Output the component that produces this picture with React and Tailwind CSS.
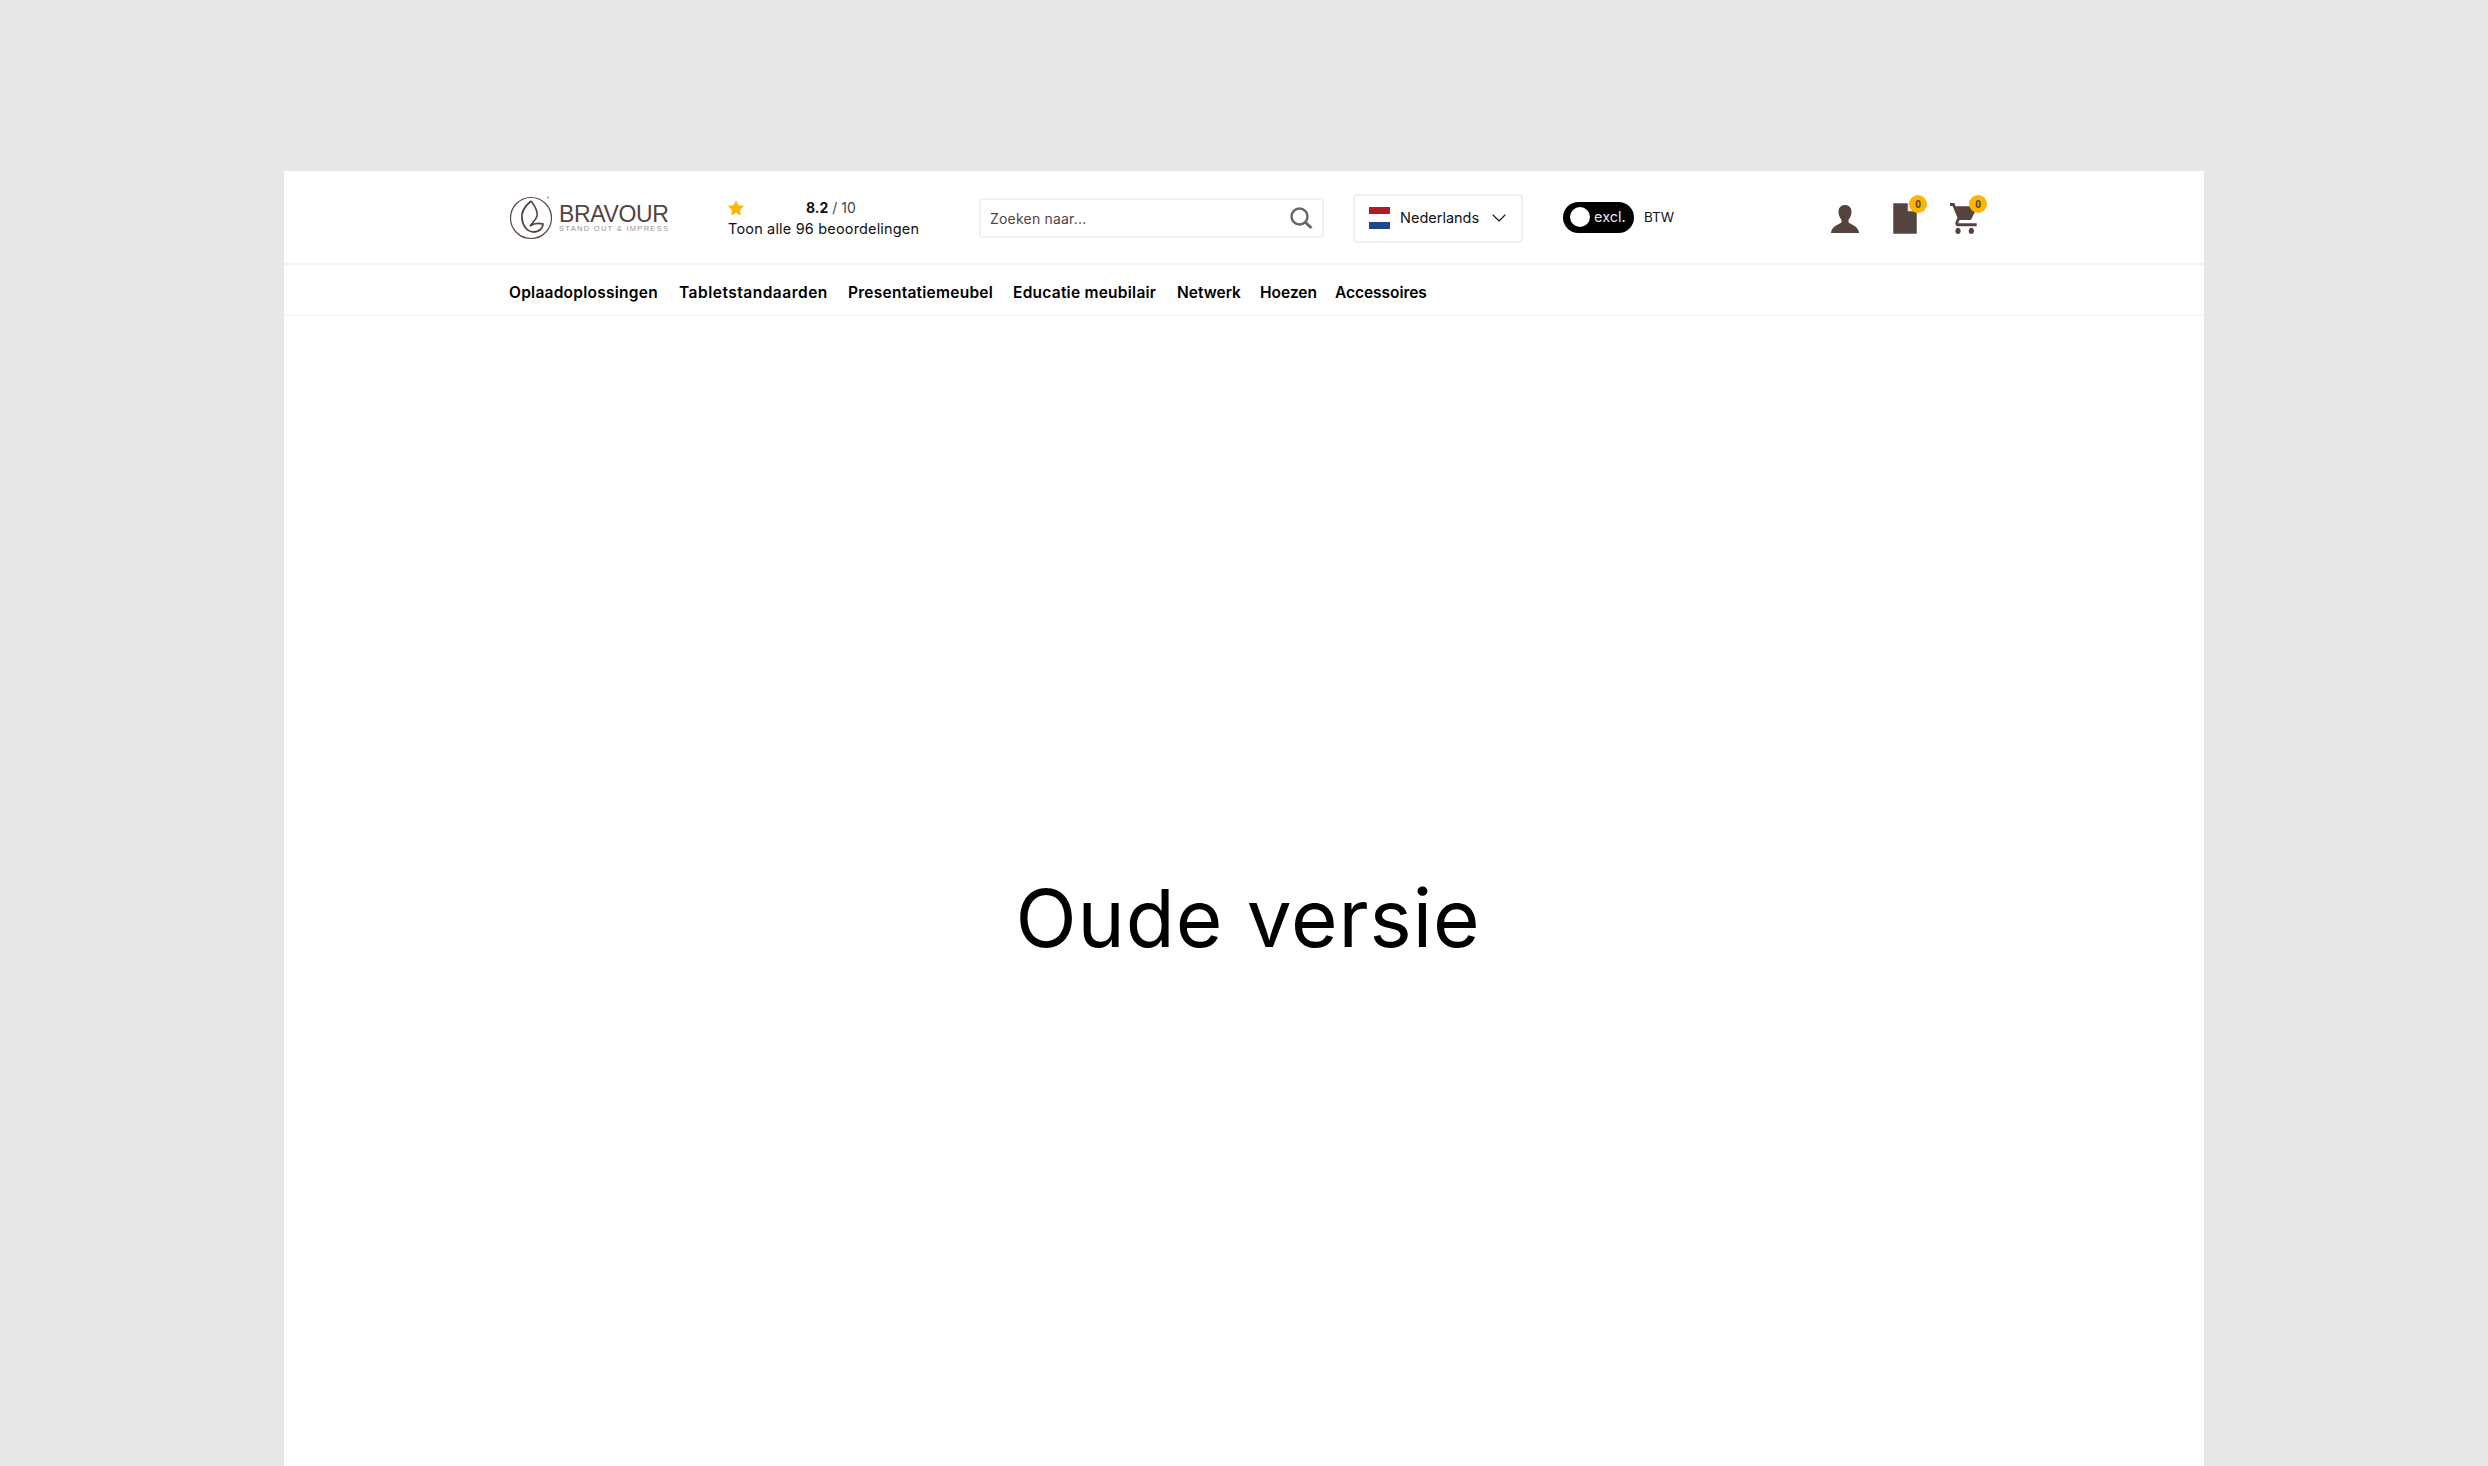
import React from 'react';
import { ChevronDown } from 'lucide-react';

const navItems = [
  { label: 'Oplaadoplossingen', width: 'w-[150px]', tracking: 'tracking-[0.25px]' },
  { label: 'Tabletstandaarden', width: 'w-[149px]', tracking: 'tracking-[0.5px]' },
  { label: 'Presentatiemeubel', width: 'w-[145px]', tracking: 'tracking-[0.25px]' },
  { label: 'Educatie meubilair', width: 'w-[144px]', tracking: 'tracking-[0.25px]' },
  { label: 'Netwerk', width: 'w-[63px]', tracking: 'tracking-[0px]' },
  { label: 'Hoezen', width: 'w-[55px]', tracking: 'tracking-[0px]' },
  { label: 'Accessoires', width: 'w-[92px]', tracking: 'tracking-[-0.05px]' },
];

const Badge = ({ className }) => (
  <span className={`absolute flex h-[18px] w-[18px] items-center justify-center rounded-full bg-[#fdb500] text-[10px] font-bold leading-none text-[#54433f] ${className}`}>
    0
  </span>
);

const Logo = () => (
  <div className="flex w-[219px] items-center">
    <svg width="44" height="44" viewBox="0 0 44 44" fill="none" stroke="#54433f" className="shrink-0">
      <circle cx="22" cy="22" r="20.5" strokeWidth="1.2" />
      <path d="M22 5 C16 10 12 17 13 23 C14 31 19 36 25 36 C30 36 34 32 34 28 C30 27 25 27 21 30" strokeWidth="1.8" />
      <path d="M22 5 C26 10 29 15 28 20 C27 24 24 26 21 30" strokeWidth="1.6" />
      <circle cx="39" cy="1.500" r="1" fill="#999" stroke="none" />
    </svg>
    <div className="ml-[6px] flex flex-col pt-px">
      <span className="font-['Liberation_Sans',sans-serif] text-[23px] leading-[21px] tracking-[-0.35px] text-[#54433f]">BRAVOUR</span>
      <span className="font-['Liberation_Sans',sans-serif] text-[7.5px] leading-[8px] tracking-[1.3px] whitespace-nowrap text-[#9b9391]">STAND OUT &amp; IMPRESS</span>
    </div>
  </div>
);

const Rating = () => (
  <div className="w-[251px] font-['Inter',sans-serif] text-[#111]">
    <div className="flex h-[20px] items-center">
      <svg width="18" height="18" viewBox="0 0 24 24" fill="#fdb500" className="-ml-px">
        <path d="M12 1.500l3.200 6.900 7.500.9-5.500 5.200 1.400 7.500-6.600-3.700-6.600 3.700 1.400-7.500L1.300 9.300l7.500-.9z" />
      </svg>
      <span className="ml-[61px] text-[14px] leading-none">
        <b className="font-bold">8.2</b> <span className="text-[#444]">/ 10</span>
      </span>
    </div>
    <div className="mt-[1px] text-[14.5px] leading-[20px] tracking-[0.17px] whitespace-nowrap">Toon alle 96 beoordelingen</div>
  </div>
);

const Search = () => (
  <div className="flex h-[40px] w-[345px] items-center justify-between rounded-[4px] border-2 border-[#f0f0f0] pl-[9px] pr-[9px]">
    <span className="font-['Inter',sans-serif] text-[14px] tracking-[0.2px] text-[#54433f]">Zoeken naar...</span>
    <svg width="24" height="24" viewBox="0 0 24 24" fill="none" stroke="#666" strokeWidth="2.4">
      <circle cx="10.500" cy="10.500" r="8" />
      <path d="M16.500 16.500l6 5.500" strokeWidth="3" />
    </svg>
  </div>
);

const LanguageSelect = () => (
  <div className="ml-[29px] flex h-[49px] w-[170px] items-center rounded-[4px] border-2 border-[#f0f0f0] pl-[14px]">
    <div className="flex h-[22px] w-[21px] flex-col">
      <div className="h-[7px] bg-[#ae1c28]" />
      <div className="h-[8px] bg-white" />
      <div className="h-[7px] bg-[#21468b]" />
    </div>
    <span className="ml-[10px] w-[80px] font-['Inter',sans-serif] text-[14.5px] text-[#111]">Nederlands</span>
    <ChevronDown size={24} strokeWidth={1.1} className="ml-[7px] text-[#111]" />
  </div>
);

const VatToggle = () => (
  <div className="ml-[40px] -mt-[2px] flex w-[268px] items-center">
    <div className="flex h-[31px] w-[71px] items-center rounded-full bg-black pl-[7px]">
      <div className="h-[20px] w-[20px] rounded-full bg-white" />
      <span className="ml-[4px] font-['Inter',sans-serif] text-[14.5px] text-[#e8e8e8]">excl.</span>
    </div>
    <span className="ml-[10px] font-['Inter',sans-serif] text-[13.5px] text-[#111]">BTW</span>
  </div>
);

const Icons = () => (
  <div className="flex items-center">
    <svg width="28" height="28" viewBox="0 0 28 28" fill="#54433f" className="mt-[2px]">
      <path d="M14 0c3.600 0 6.500 2.400 6.500 6.500 0 3.100-1.100 6-2.700 7.900-.6.700-.6 2.800.4 3.600 2.300 1.700 8.700 2.900 9.800 9.300v.7H0v-.7c1.100-6.400 7.500-7.600 9.800-9.300 1-.8 1-2.900.4-3.600-1.600-1.900-2.700-4.800-2.700-7.900C7.500 2.400 10.400 0 14 0z" />
    </svg>
    <div className="relative ml-[34px] h-[31px] w-[24px]">
      <svg width="24" height="31" viewBox="0 0 24 31" fill="#54433f">
        <path d="M0 0h15v8h9v23H0z" stroke="#c9c5c4" strokeWidth="0.8" />
      </svg>
      <Badge className="left-[16px] top-[-8px]" />
    </div>
    <div className="relative ml-[33px] h-[31px] w-[28px]">
      <svg width="28" height="31" viewBox="1 2 21 20" preserveAspectRatio="none" fill="#54433f">
        <path d="M7 18c-1.100 0-1.990.9-1.990 2S5.900 22 7 22s2-.9 2-2-.9-2-2-2zM1 2v2h2l3.600 7.590-1.350 2.450c-.16.28-.25.61-.25.96 0 1.100.9 2 2 2h14v-2H7.420c-.14 0-.25-.11-.25-.25l.03-.12.9-1.630h7.450c.75 0 1.410-.41 1.750-1.030l3.580-6.470c.08-.14.12-.31.12-.48 0-.55-.45-1-1-1H5.210l-.94-2H1zm16 16c-1.100 0-1.990.9-1.990 2s.89 2 1.990 2 2-.9 2-2-.9-2-2-2z" />
      </svg>
      <Badge className="left-[19px] top-[-8px]" />
    </div>
  </div>
);

export default function App() {
  return (
    <div className="flex h-screen flex-col overflow-hidden bg-[#e7e7e7] px-[284px] pt-[171px]">
      <div className="flex flex-1 flex-col bg-white">
        <header className="flex h-[94px] items-center border-b-2 border-[#f3f3f3] pl-[225px] pt-[2px]">
          <Logo />
          <Rating />
          <Search />
          <LanguageSelect />
          <VatToggle />
          <Icons />
        </header>

        <nav className="flex h-[51px] items-center gap-[20px] border-b-2 border-[#f7f7f7] pl-[225px] pt-[6px]">
          {navItems.map((item) => (
            <a key={item.label} className={`${item.width} ${item.tracking} font-['Inter',sans-serif] text-[15.5px] font-semibold whitespace-nowrap text-black`}>
              {item.label}
            </a>
          ))}
        </nav>

        <main className="flex flex-1 justify-center pt-[553px]">
          <h1 className="pl-[8px] font-['Inter',sans-serif] text-[80px] leading-[97px] tracking-[0.9px] font-normal text-black">Oude versie</h1>
        </main>
      </div>
    </div>
  );
}
